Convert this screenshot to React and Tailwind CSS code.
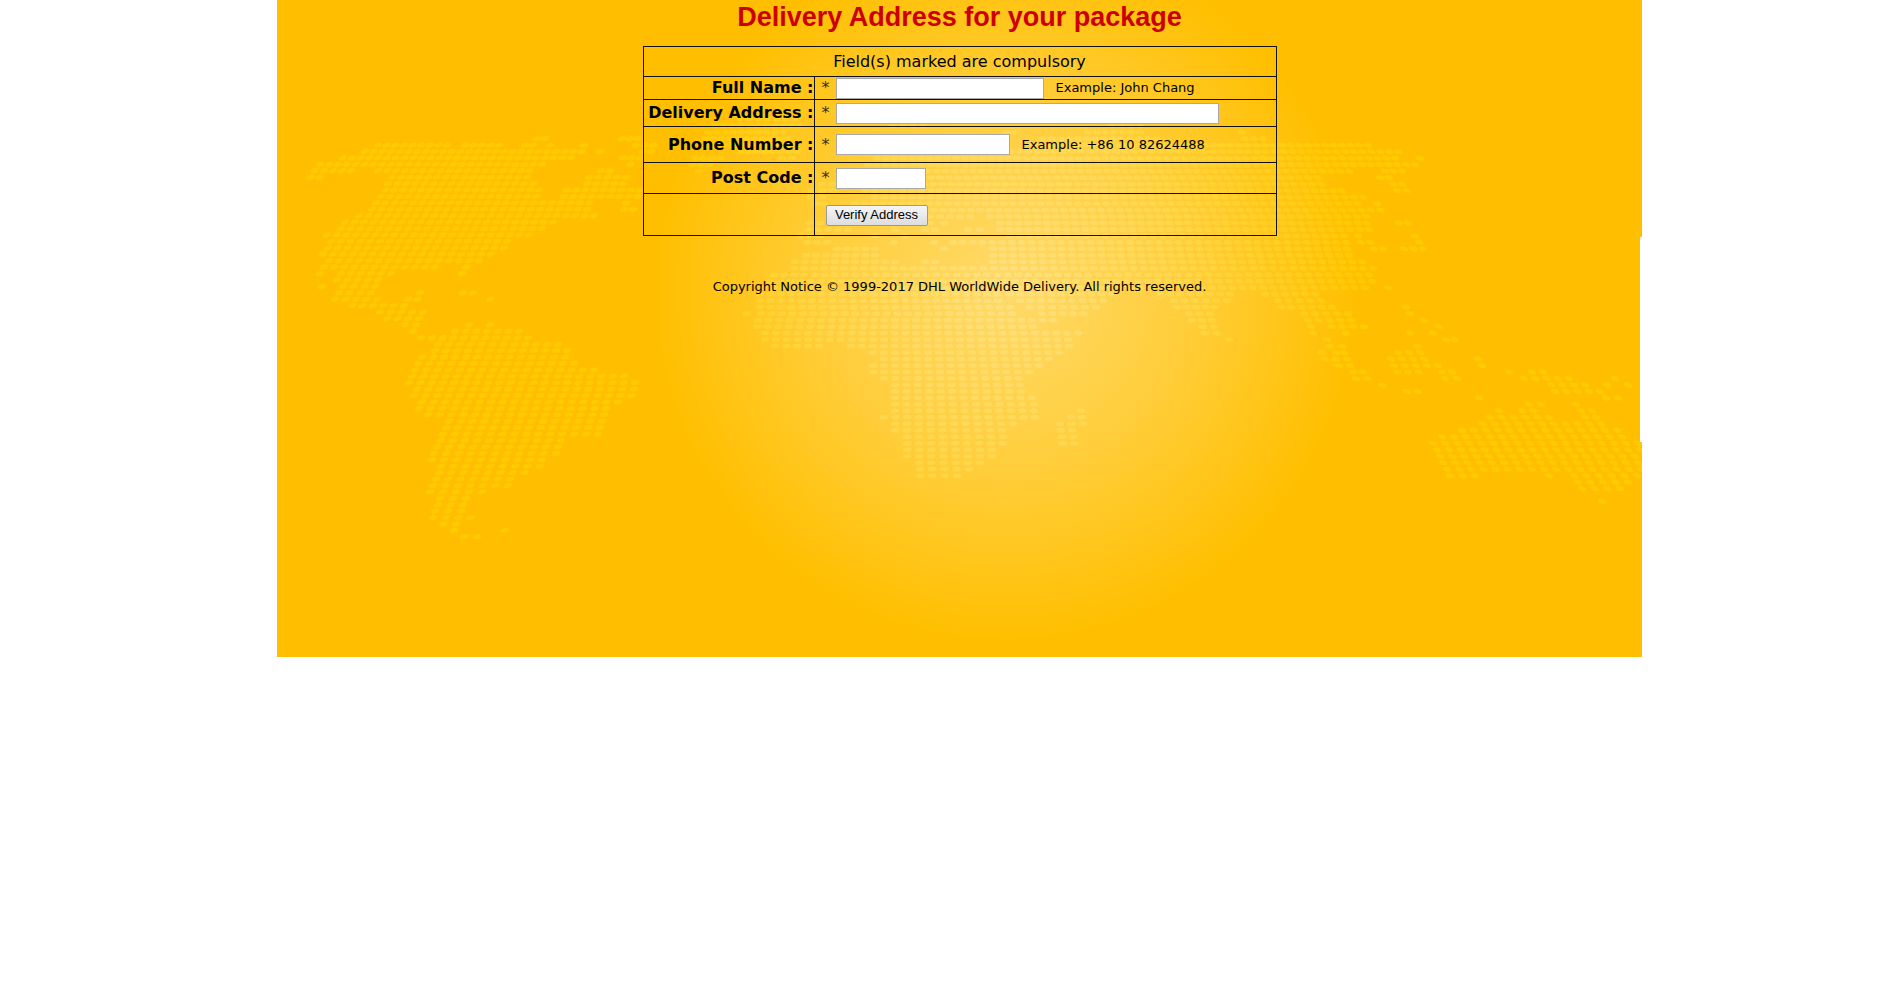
import React from "react";

// Each entry: row number, then pairs of first/last dot positions along the row.
const MAP_ROWS = [
  [-3, 740, 795],
  [-2, 715, 800, 893, 923, 1112, 1140],
  [-1, 708, 783, 1006, 1014, 1088, 1140, 1242, 1242],
  [0, 537, 545, 622, 638, 705, 787, 1043, 1157, 1245, 1263],
  [1, 378, 447, 465, 499, 525, 533, 550, 550, 584, 584, 636, 653, 707, 790, 1033, 1368],
  [2, 365, 582, 600, 600, 643, 651, 740, 797, 940, 1398],
  [3, 343, 571, 623, 640, 695, 720, 782, 792, 877, 1395, 1420, 1420],
  [4, 320, 542, 630, 630, 692, 710, 868, 1415],
  [5, 315, 351, 378, 530, 601, 610, 699, 699, 865, 1349, 1385, 1402],
  [6, 311, 320, 392, 527, 589, 626, 868, 1317, 1380, 1389],
  [7, 388, 533, 587, 623, 822, 832, 870, 1321, 1393, 1402],
  [8, 385, 539, 567, 640, 812, 833, 866, 1342, 1397, 1407],
  [9, 381, 536, 564, 638, 810, 822, 875, 1363],
  [10, 376, 589, 626, 626, 816, 824, 855, 1357, 1377, 1377],
  [11, 372, 587, 624, 633, 850, 1380],
  [12, 359, 594, 860, 910, 930, 970, 990, 1366],
  [13, 345, 553, 809, 820, 840, 900, 930, 944, 1000, 1367, 1399, 1408],
  [14, 341, 542, 808, 848, 895, 895, 925, 935, 968, 980, 1000, 1369],
  [15, 327, 529, 800, 820, 875, 875, 905, 905, 1010, 1344, 1358, 1358, 1415, 1415],
  [16, 331, 507, 807, 827, 894, 894, 934, 934, 953, 1346, 1361, 1370, 1419, 1419],
  [17, 328, 504, 837, 875, 944, 944, 993, 1347, 1374, 1383, 1404, 1423],
  [18, 323, 491, 806, 875, 993, 1349],
  [19, 329, 479, 795, 895, 925, 935, 993, 1362],
  [20, 324, 435, 466, 466, 794, 983, 994, 1373],
  [21, 320, 320, 341, 391, 462, 462, 774, 987, 998, 1369],
  [22, 337, 378, 770, 1372],
  [23, 322, 322, 343, 375, 763, 1365, 1388, 1388],
  [24, 339, 371, 420, 420, 463, 473, 760, 997, 1010, 1112, 1160, 1230, 1265, 1315],
  [25, 335, 377, 408, 417, 490, 490, 760, 998, 1020, 1103, 1174, 1227, 1278, 1321],
  [26, 352, 404, 760, 1010, 1030, 1096, 1177, 1215, 1281, 1332, 1406, 1406],
  [27, 380, 423, 747, 747, 761, 1012, 1042, 1083, 1189, 1210, 1304, 1348, 1410, 1410],
  [28, 387, 419, 758, 1053, 1192, 1212, 1308, 1351, 1424, 1424],
  [29, 405, 416, 469, 469, 490, 490, 757, 1033, 1203, 1214, 1311, 1311, 1332, 1364, 1439, 1439],
  [30, 413, 413, 455, 519, 765, 1078, 1205, 1217, 1313, 1313, 1346, 1346, 1410, 1410, 1433, 1433],
  [31, 421, 528, 765, 1068, 1229, 1229, 1327, 1327, 1446, 1455],
  [32, 438, 558, 775, 819, 851, 1069, 1330, 1342, 1417, 1417],
  [33, 435, 567, 873, 1059, 1322, 1322, 1336, 1344, 1398, 1420],
  [34, 422, 565, 884, 1049, 1325, 1325, 1336, 1347, 1391, 1424, 1478, 1478],
  [35, 418, 574, 873, 1039, 1339, 1350, 1394, 1438, 1482, 1482],
  [36, 415, 594, 873, 1029, 1353, 1363, 1397, 1419, 1442, 1452, 1509, 1509, 1532, 1543],
  [37, 412, 624, 884, 1019, 1356, 1367, 1445, 1457, 1524, 1569, 1615, 1615],
  [38, 409, 635, 895, 1020, 1382, 1382, 1551, 1585, 1607, 1607, 1628, 1628],
  [39, 417, 634, 895, 1021, 1407, 1418, 1555, 1600],
  [40, 414, 632, 895, 1032, 1479, 1479, 1606, 1618],
  [41, 422, 618, 895, 1034, 1529, 1541, 1576, 1576],
  [42, 419, 606, 895, 1034, 1081, 1081, 1499, 1499, 1522, 1533, 1581, 1592],
  [43, 428, 604, 884, 1035, 1071, 1082, 1490, 1549, 1585, 1596],
  [44, 449, 602, 895, 1013, 1060, 1083, 1483, 1601],
  [45, 446, 600, 895, 1002, 1061, 1072, 1462, 1617],
  [46, 443, 598, 907, 1003, 1062, 1073, 1442, 1622],
  [47, 441, 561, 907, 1003, 1063, 1074, 1433, 1638],
  [48, 437, 558, 907, 992, 1437, 1640],
  [49, 434, 556, 907, 992, 1440, 1635],
  [50, 432, 542, 919, 980, 1443, 1638],
  [51, 441, 540, 920, 969, 1447, 1641],
  [52, 439, 525, 920, 957, 1450, 1475, 1549, 1549, 1574, 1637],
  [53, 436, 510, 1578, 1628],
  [54, 433, 508, 1582, 1620],
  [55, 430, 482],
  [56, 440, 466, 1602, 1602],
  [57, 438, 463],
  [58, 435, 461],
  [59, 433, 471],
  [60, 443, 456],
  [61, 454, 454, 505, 505],
  [62, 464, 477],
];

const DOTS = MAP_ROWS.flatMap(([row, ...spans]) => {
  const step = 8.6 + 0.07 * Math.max(row, 0);
  const dots = [];
  for (let i = 0; i < spans.length; i += 2) {
    const from = spans[i];
    const gaps = Math.round((spans[i + 1] - from) / step);
    for (let k = 0; k <= gaps; k++) {
      const x = gaps ? from + ((spans[i + 1] - from) * k) / gaps : from;
      dots.push({ x, y: 138.7 + row * (x < 660 ? 6.42 : 6.48), tilt: (x - 960) / 32 });
    }
  }
  return dots;
});

function WorldMap() {
  return (
    <svg
      className="absolute inset-0 h-full w-full"
      viewBox="277 0 1365 657"
      preserveAspectRatio="xMidYMid slice"
      aria-hidden="true"
    >
      <defs>
        <radialGradient id="glow" gradientUnits="userSpaceOnUse" cx="1005" cy="290" r="352">
          <stop offset="0" stopColor="#ffda6a" />
          <stop offset="0.5" stopColor="#ffce3c" />
          <stop offset="1" stopColor="#ffbf00" />
        </radialGradient>
        <radialGradient id="dot" gradientUnits="userSpaceOnUse" cx="1005" cy="290" r="352">
          <stop offset="0" stopColor="#ffe183" />
          <stop offset="0.5" stopColor="#ffd74c" />
          <stop offset="1" stopColor="#ffca00" />
        </radialGradient>
      </defs>
      <rect x="277" y="0" width="1365" height="657" fill="url(#glow)" />
      <path
        fill="url(#dot)"
        d={DOTS.map(({ x, y, tilt }) => {
          const a = (tilt * Math.PI) / 180;
          const dx = 4.2 * Math.cos(a);
          const dy = 4.2 * Math.sin(a);
          const p = (n) => n.toFixed(1);
          return `M${p(x - dx)} ${p(y - dy)}A4.2 2.3 ${p(tilt)} 1 1 ${p(x + dx)} ${p(y + dy)}A4.2 2.3 ${p(tilt)} 1 1 ${p(x - dx)} ${p(y - dy)}Z`;
        }).join("")}
      />
    </svg>
  );
}

const FIELDS = [
  { id: "name", label: "Full Name :", row: "h-[23px]", width: "w-[208px]", example: "Example: John Chang" },
  { id: "address", label: "Delivery Address :", row: "h-[27px]", width: "w-[383px]" },
  { id: "phone", label: "Phone Number :", row: "h-9", width: "w-[174px]", example: "Example: +86 10 82624488" },
  { id: "postcode", label: "Post Code :", row: "h-[31px]", width: "w-[90px]" },
];

export default function App() {
  return (
    <div className="flex justify-center bg-white pl-[26px] font-['Verdana','DejaVu_Sans',sans-serif] text-black">
      <main className="relative min-h-[657px] w-full max-w-[1365px] bg-[#ffbf00]">
        <WorldMap />
        <div className="absolute top-[237px] right-0 h-[205px] w-0.5 bg-white" />
        <div className="relative flex flex-col items-center">
          <h1 className="h-[46px] font-['Liberation_Sans',Arial,sans-serif] text-[27px] leading-[34px] font-bold text-[#cc0000]">
            Delivery Address for your package
          </h1>
          <form onSubmit={(e) => e.preventDefault()}>
            <table className="w-[634px] table-fixed border-collapse border border-[#111]">
              <colgroup>
                <col className="w-[171px]" />
                <col />
              </colgroup>
              <tbody>
                <tr className="h-[30px]">
                  <td colSpan={2} className="border border-[#111] p-0 pt-px text-center text-base leading-5">
                    Field(s) marked are compulsory
                  </td>
                </tr>
                {FIELDS.map((f) => (
                  <tr key={f.id} className={f.row}>
                    <th className="border border-[#111] p-0 text-right text-base leading-5 font-bold whitespace-nowrap">
                      <label htmlFor={f.id}>{f.label}</label>
                    </th>
                    <td className="border border-[#111] p-0">
                      <div className="flex items-center pl-[7px]">
                        <span className="w-3.5 text-base leading-5 text-[#333]">*</span>
                        <input
                          id={f.id}
                          type="text"
                          className={`h-[21px] border border-[#a9a9a9] bg-white px-1 text-[13px] ${f.width}`}
                        />
                        {f.example && <span className="pl-3 text-[13px] leading-4">{f.example}</span>}
                      </div>
                    </td>
                  </tr>
                ))}
                <tr className="h-[42px]">
                  <td className="border border-[#111] p-0" />
                  <td className="border border-[#111] p-0 pt-px pl-[11px]">
                    <button
                      type="submit"
                      className="block h-[21px] w-[102px] rounded-xs border border-[#999] bg-linear-to-b from-[#f6f6f6] to-[#dddddd] font-['Liberation_Sans',Arial,sans-serif] text-[13px] leading-4 whitespace-nowrap"
                    >
                      Verify Address
                    </button>
                  </td>
                </tr>
              </tbody>
            </table>
          </form>
          <p className="mt-[43px] text-[13px] leading-4">
            Copyright Notice © 1999-2017 DHL WorldWide Delivery. All rights reserved.
          </p>
        </div>
      </main>
    </div>
  );
}
